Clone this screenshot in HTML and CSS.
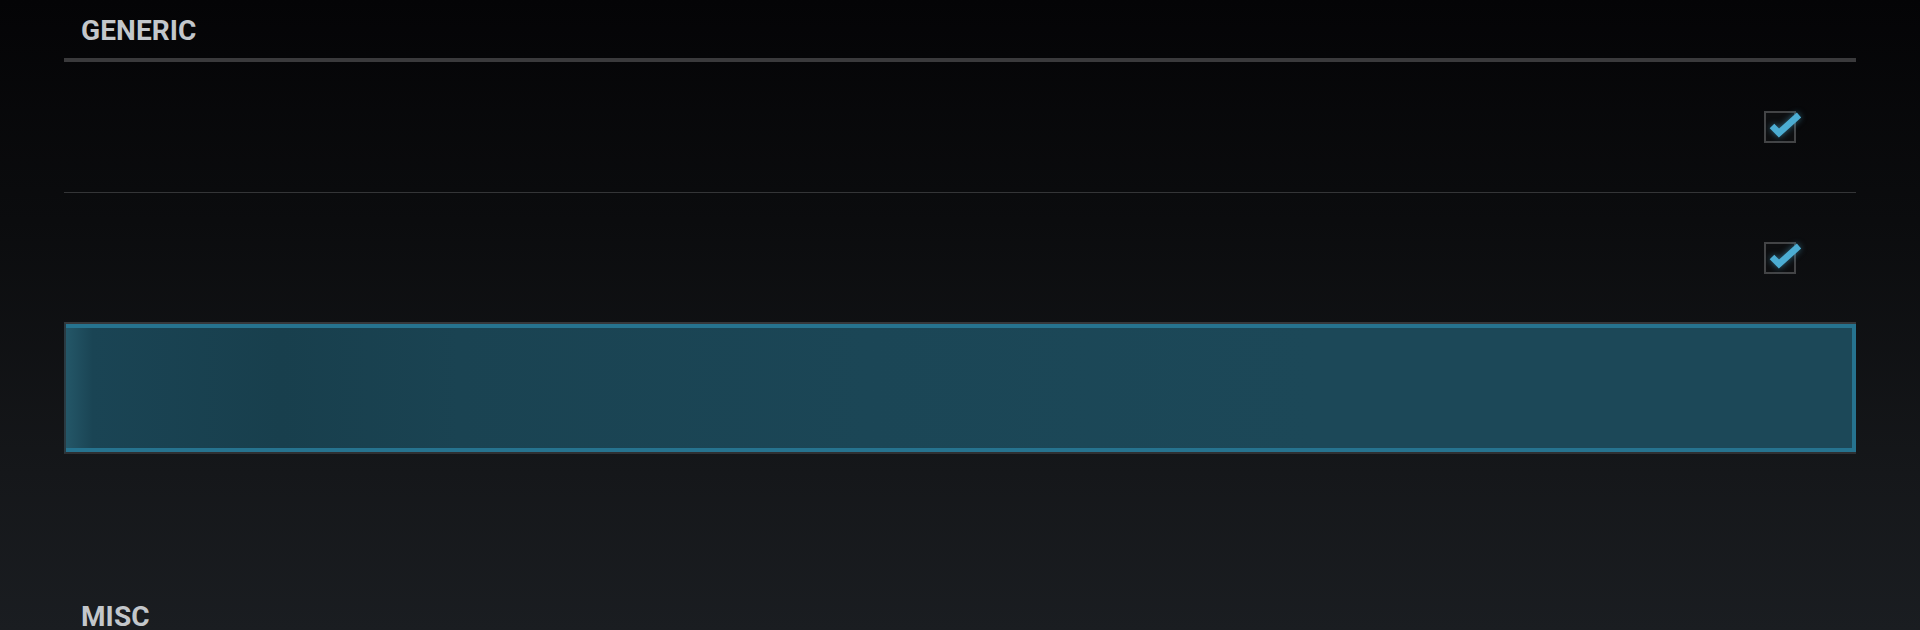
FILE: index.html
```html
<!DOCTYPE html>
<html>
<head>
<meta charset="utf-8">
<link rel="stylesheet" href="styles.css">
</head>
<body>
<div class="page">
  <section class="section">
    <div class="section-title">GENERIC</div>
    <div class="row row-sep">
      <div class="check">
        <svg class="tick" width="42" height="36" viewBox="0 0 42 36"><path d="M10 16 L17 23 L37 5" fill="none" stroke="#4cadd3" stroke-width="6.5" stroke-linecap="butt" stroke-linejoin="miter"/></svg>
      </div>
    </div>
    <div class="row">
      <div class="check">
        <svg class="tick" width="42" height="36" viewBox="0 0 42 36"><path d="M10 16 L17 23 L37 5" fill="none" stroke="#4cadd3" stroke-width="6.5" stroke-linecap="butt" stroke-linejoin="miter"/></svg>
      </div>
    </div>
    <div class="row-selected">
      <div class="row-selected-inner"></div>
    </div>
  </section>
  <section class="section section-misc">
    <div class="section-title">MISC</div>
  </section>
</div>
</body>
</html>
```
FILE: styles.css
```css
html, body {
  margin: 0;
  padding: 0;
}
body {
  width: 1920px;
  height: 630px;
  overflow: hidden;
  background: linear-gradient(180deg, #040406 0%, #0b0c0e 35%, #15171a 75%, #1a1d21 100%);
  font-family: Roboto, "Noto Sans", sans-serif;
}
.page {
  padding: 0 64px;
}
.section-title {
  font-size: 28px;
  line-height: 28px;
  font-weight: 700;
  color: #c3c7cb;
  padding: 17px 0 13px 17px;
  border-bottom: 4px solid #3a3a3c;
  letter-spacing: 0.1px;
}
.section-misc {
  margin-top: 132px;
}
.section-misc .section-title {
  border-bottom: none;
}
.row {
  height: 129px;
  display: flex;
  align-items: center;
  justify-content: flex-end;
  padding-right: 60px;
}
.row-sep {
  height: 130px;
  border-bottom: 1px solid #343537;
}
.check {
  width: 28px;
  height: 28px;
  border: 2px solid #434446;
  background: #0d0e10;
  position: relative;
}
.tick {
  position: absolute;
  left: -4px;
  top: -3px;
  overflow: visible;
  filter: drop-shadow(0 0 3px rgba(76, 173, 211, 0.55));
}
.row-selected {
  border-top: 2px solid #36383b;
  border-bottom: 2px solid #2e3033;
  border-left: 2px solid #2a3a42;
}
.row-selected-inner {
  height: 120px;
  border-top: 4px solid #26738f;
  border-right: 4px solid #26738f;
  border-bottom: 4px solid #26738f;
  background: linear-gradient(90deg, #245768 0%, #1a4454 1.5%, #183f4d 12%, #1a4352 22%, #1b4656 45%, #1c4858 70%, #1c4858 100%);
}
```
